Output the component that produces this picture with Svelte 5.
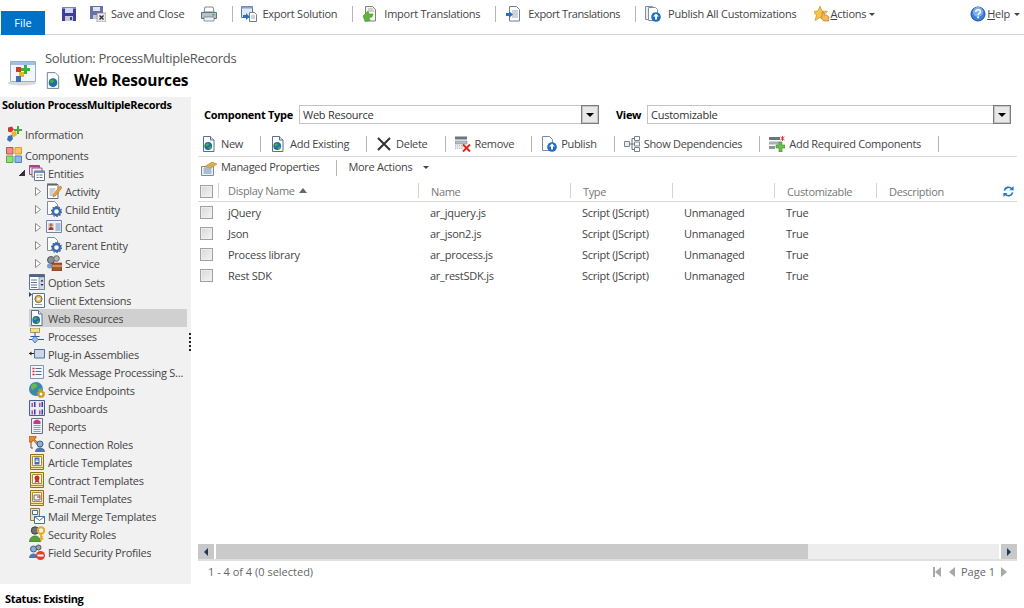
<script>
  const ribbon = [
    { icon: 'save', cls: 'lead' },
    { icon: 'saveclose', text: 'Save and Close', cls: 'gap14' },
    { icon: 'print', cls: 'gap17' },
    { sep: true },
    { icon: 'export', text: 'Export Solution', cls: 'rexport' },
    { sep: true },
    { icon: 'import', text: 'Import Translations', cls: 'rimport' },
    { sep: true },
    { icon: 'exporttr', text: 'Export Translations', cls: 'rexptr' },
    { sep: true },
    { icon: 'publishall', text: 'Publish All Customizations', cls: 'rpub' }
  ];
  const cmd1 = [
    { icon: 'web', text: 'New' },
    { icon: 'web', text: 'Add Existing' },
    { icon: 'delete', text: 'Delete' },
    { icon: 'remove', text: 'Remove' },
    { icon: 'publish', text: 'Publish' },
    { icon: 'showdep', text: 'Show Dependencies' },
    { icon: 'addreq', text: 'Add Required Components' }
  ];
  const entities = [
    { icon: 'activity', text: 'Activity' },
    { icon: 'entity', text: 'Child Entity' },
    { icon: 'contact', text: 'Contact' },
    { icon: 'entity', text: 'Parent Entity' },
    { icon: 'service', text: 'Service' }
  ];
  const nav = [
    { icon: 'optionsets', text: 'Option Sets' },
    { icon: 'clientext', text: 'Client Extensions' },
    { icon: 'web', text: 'Web Resources', selected: true },
    { icon: 'processes', text: 'Processes' },
    { icon: 'plugin', text: 'Plug-in Assemblies' },
    { icon: 'sdk', text: 'Sdk Message Processing S...' },
    { icon: 'endpoints', text: 'Service Endpoints' },
    { icon: 'dashboards', text: 'Dashboards' },
    { icon: 'reports', text: 'Reports' },
    { icon: 'conn', text: 'Connection Roles' },
    { icon: 'article', text: 'Article Templates' },
    { icon: 'contract', text: 'Contract Templates' },
    { icon: 'email', text: 'E-mail Templates' },
    { icon: 'mailmerge', text: 'Mail Merge Templates' },
    { icon: 'security', text: 'Security Roles' },
    { icon: 'fieldsec', text: 'Field Security Profiles' }
  ];
  const rows = [
    ['jQuery', 'ar_jquery.js'],
    ['Json', 'ar_json2.js'],
    ['Process library', 'ar_process.js'],
    ['Rest SDK', 'ar_restSDK.js']
  ];
</script>

{#snippet doc()}
  <path d="M2.500 .5h7l3.500 3.500v11.500h-10.500z" fill="#fff" stroke="#5d7186"/>
  <path d="M9.500 .5v3.500h3.500" fill="#dfe6ee" stroke="#5d7186"/>
{/snippet}

{#snippet ic(name)}
  <svg class="ic" width="16" height="16" viewBox="0 0 16 16" aria-hidden="true">
    {#if name === 'save'}
      <path d="M1 1h14v14h-14z" fill="#3d3f9c"/><path d="M1 1h14v2h-14z" fill="#7d80d6"/>
      <path d="M4 2h8v5h-8z" fill="#d5d7f0"/><path d="M4 10h8v5h-8z" fill="#c9c9d2"/><path d="M9 11h2v3h-2z" fill="#3d3f9c"/>
    {:else if name === 'saveclose'}
      <path d="M0 0h13v13h-13z" fill="#6a71a8"/><path d="M3 1h7v4h-7z" fill="#dfe3f3"/><path d="M3 9h7v4h-7z" fill="#c5c7d2"/>
      <path d="M7 7h9v9h-9z" fill="#e8e8e8" stroke="#777" stroke-width=".6"/><path d="M9.500 9.500l4 4m0-4l-4 4" stroke="#333" stroke-width="1.400"/>
    {:else if name === 'print'}
      <path d="M4 1h8l1 5h-10z" fill="#fff" stroke="#7b8794"/><path d="M.5 6.500h15v6h-15z" fill="#b9c1c9" stroke="#66717c"/>
      <path d="M3 11h10v4h-10z" fill="#eef1f3" stroke="#66717c" stroke-width=".7"/><path d="M11.500 8h2v1.500h-2z" fill="#29b34a"/>
    {:else if name === 'export'}
      <path d="M.5 .5h11v11h-11z" fill="#dfeaf6" stroke="#5c7aa0"/><path d="M.5 .5h11v2h-11z" fill="#7ea3cf"/>
      <path d="M8.500 6.500h5l2 2v7h-7z" fill="#fff" stroke="#6f7f90"/><path d="M10 10h4m-4 2h4" stroke="#9aa7b3"/>
      <path d="M2 9h3v-2l3.500 3.500-3.500 3.500v-2h-3z" fill="#2a6fc3"/>
    {:else if name === 'import'}
      <path d="M3.500 .5h7l3 3v11.500h-10z" fill="#f6f6ee" stroke="#7a8578"/><path d="M6 3h5m-5 2h6" stroke="#a9b0a0"/>
      <path d="M1 10l5-5 1 3 4 0-1 3-3 .500 1 3-5 1z" fill="#5db53a" stroke="#3a8a25" stroke-width=".5"/>
    {:else if name === 'exporttr'}
      <path d="M4.500 .5h7l3 3v11.500h-10z" fill="#fff" stroke="#6f7f90"/><path d="M7 5h6m-6 2h6m-6 2h6m-6 2h6" stroke="#9aa7b3"/>
      <path d="M1 7h3v-2l4 3.500-4 3.500v-2h-3z" fill="#2a6fc3"/>
    {:else if name === 'publishall'}
      <path d="M.5 .5h7l2 2v11h-9z" fill="#e9eef4" stroke="#8090a2"/><path d="M3.500 1.500h7l2 2v11h-9z" fill="#fff" stroke="#8090a2"/>
      <circle cx="11" cy="11" r="4.800" fill="#1e6cc0"/><path d="M11 7.500l3 3h-2v3h-2v-3h-2z" fill="#fff"/>
    {:else if name === 'publish'}
      <path d="M1.500 .5h7l3 3v11h-10z" fill="#fff" stroke="#7b8ba0"/>
      <circle cx="11" cy="11" r="4.800" fill="#1e6cc0"/><path d="M11 7.500l3 3h-2v3h-2v-3h-2z" fill="#fff"/>
    {:else if name === 'actions'}
      <path d="M6 0l2 5 5.500.500-4 3.500 1.500 5.500-5-3-5 3 1.500-5.500-4-3.500 5.500-.500z" fill="#f2c64a" stroke="#b98d1c" stroke-width=".6"/>
      <path d="M8 6l1.500 0 1 3 2 0 2.500 2-.5 4-5 0-3-4 1.500-.500z" fill="#f4b958" stroke="#a9701c" stroke-width=".6"/>
    {:else if name === 'help'}
      <circle cx="8" cy="8" r="7" fill="#3f7fd6" stroke="#1f4fa0"/><circle cx="8" cy="6" r="5" fill="#7fb0ec"/>
      <path d="M5.800 6c0-3 4.600-3 4.600-.300 0 1.800-2.300 1.800-2.300 3.500" fill="none" stroke="#fff" stroke-width="1.500"/><path d="M7.200 10.500h1.800v1.800h-1.800z" fill="#fff"/>
    {:else if name === 'web'}
      {@render doc()}
      <circle cx="7.200" cy="10" r="3.900" fill="#1f6fa8"/><path d="M4.500 8.500c1.300-1.700 3-1.300 3.500-.3s-1 1.800-2 1.800-1.800 0-1.500-1.500z" fill="#4bad3e"/><path d="M7.500 11.500l2.800-1.500-.5 2.200-1.500 1.200z" fill="#4bad3e"/>
    {:else if name === 'delete'}
      <path d="M2 2l12 12m0-12l-12 12" stroke="#333" stroke-width="2"/>
    {:else if name === 'remove'}
      <path d="M0 .5h12v3h-12z" fill="#6b7580"/><path d="M0 5h12v3h-12z" fill="#b9c0c8" stroke="#6b7580" stroke-width=".5"/><path d="M0 9.500h8v3h-8z" fill="#e2e5e8" stroke="#8a929a" stroke-width=".5" stroke-dasharray="1"/>
      <path d="M8 8.500l7 7m0-7l-7 7" stroke="#e0261c" stroke-width="2"/>
    {:else if name === 'showdep'}
      <path d="M.5 5.500h5v5h-5z" fill="#e9edf1" stroke="#77838f"/><path d="M10.500 .5h5v4h-5zM10.500 6h5v4h-5zM10.500 11.500h5v4h-5z" fill="#fff" stroke="#77838f"/>
      <path d="M5.500 8h5m-2.500-5.500v11m0-11h2.500m-2.500 11h2.500" fill="none" stroke="#66717c"/>
    {:else if name === 'addreq'}
      <path d="M0 1h11v3h-11z" fill="#6b7580"/><path d="M0 5.500h11v3h-11z" fill="#a7b0ba"/><path d="M0 10h6v3h-6z" fill="#8b95a0"/>
      <path d="M8 9h3v-3h3v3h3v3h-3v4h-3v-4h-3z" transform="translate(-1 0)" fill="#6cc04a" stroke="#3d8a25" stroke-width=".6"/>
      <path d="M13.500 0v5m-2-4l4 3m0-3l-4 3" stroke="#e0261c" stroke-width=".9"/>
    {:else if name === 'managed'}
      <path d="M.5 6.500h12v9h-12z" fill="#eef2f6" stroke="#7b8ba0"/><path d="M2.500 9h8m-8 2h8m-8 2h8" stroke="#6b88ad"/>
      <path d="M3 7l8-5 5 2-6 4z" fill="#d8b04a" stroke="#9e7c24" stroke-width=".5"/>
    {:else if name === 'info'}
      <path d="M2 1.500l4-1 2 3-3 3-3-1z" fill="#d9342a"/><path d="M6 6l4-1 1 4-3 2-3-1z" fill="#eab52a"/><path d="M2 10l4-1 1 4-3 3-3-2z" fill="#3a6fc0"/>
      <path d="M11 0h2v3h3v2h-3v3h-2v-3h-3v-2h3z" fill="#3fae3a"/>
    {:else if name === 'components'}
      <path d="M.5 .5h6.500v6.500h-6.500z" fill="#f28c8c" stroke="#d24a4a"/><path d="M9 .5h6.500v6.500h-6.500z" fill="#fbc55a" stroke="#e49a1c"/>
      <path d="M.5 9h6.500v6.500h-6.500z" fill="#92dc7c" stroke="#4eaf3a"/><path d="M9 9h6.500v6.500h-6.500z" fill="#8fb8ef" stroke="#4a80cf"/>
    {:else if name === 'entities'}
      <path d="M.5 .5h10v9h-10z" fill="#f2e8ef" stroke="#9a4a7c"/><path d="M.5 .5h10v2h-10z" fill="#a2487f"/>
      <path d="M3 3h10v9h-10z" fill="#f2eef2" stroke="#8a5a84"/><path d="M5.500 6h10v9.500h-10z" fill="#fff" stroke="#5f7590"/><path d="M5.500 6h10v2h-10z" fill="#7390b4"/>
      <path d="M7.500 10h2m1 0h3m-6 2.500h2m1 0h3" stroke="#5f7590"/>
    {:else if name === 'activity'}
      <path d="M1.500 1.500h10.500v14h-10.500z" fill="#fff" stroke="#66717c"/><path d="M2 0v3m2-3v3m2-3v3m2-3v3m2-3v3" stroke="#555"/>
      <path d="M3.500 6h6m-6 2h5m-5 2h4m-4 2h4" stroke="#8f9ba8"/><path d="M14 3l2 1.500-6 8-3 1.500.5-3z" fill="#eba23a" stroke="#a5641c" stroke-width=".5"/>
    {:else if name === 'entity'}
      <path d="M1.500 .5h7l3 3v10h-10z" fill="#fff" stroke="#7b8ba0"/>
      <circle cx="10.500" cy="10.500" r="3.500" fill="#fff" stroke="#3a6aa8" stroke-width="2.400"/><circle cx="10.500" cy="10.500" r="5" fill="none" stroke="#3a6aa8" stroke-width="1.200" stroke-dasharray="1.600 1.500"/>
    {:else if name === 'contact'}
      <path d="M.5 1.500h15v12h-15z" fill="#eef3f9" stroke="#6f88aa"/><path d="M2 4h6v7h-6z" fill="#cbd6e4"/><circle cx="5" cy="6" r="1.700" fill="#c86a3a"/><path d="M2.500 11c0-4 5-4 5 0z" fill="#a83a1c"/>
      <path d="M9.500 5h5m-5 2h5m-5 2h5m-5 2h5" stroke="#6b88ad"/>
    {:else if name === 'service'}
      <circle cx="5" cy="5" r="3.500" fill="#8a8f95" stroke="#555"/><circle cx="10.500" cy="3.500" r="2.800" fill="#b0b4b8" stroke="#666"/>
      <circle cx="3.500" cy="11" r="2.500" fill="#7a9ad8"/><path d="M6 8h10v8h-10z" fill="#a8582a" stroke="#6a3416" stroke-width=".6"/><path d="M6 11h10" stroke="#e8c9a0"/>
    {:else if name === 'optionsets'}
      <path d="M.5 .5h15v15h-15z" fill="#fff" stroke="#5f7590"/><path d="M.5 .5h15v2.500h-15z" fill="#4a6588"/><path d="M10 3h5.500v12.500h-5.500z" fill="#cfd9e6" stroke="#5f7590" stroke-width=".6"/>
      <path d="M2 6h6m-6 2.500h6m-6 2.500h6m-6 2.500h6" stroke="#5f7590"/><path d="M11.500 7.500l1.500-2 1.500 2zM11.500 10l1.500 2 1.500-2z" fill="#223"/>
    {:else if name === 'clientext'}
      <path d="M3.500 1.500h12v14h-12z" fill="#fff" stroke="#5f7590"/><circle cx="9.500" cy="7" r="3.600" fill="#e0c070" stroke="#7d6420"/><circle cx="9.500" cy="7" r="1.300" fill="#fff"/>
      <path d="M6 12.500h7" stroke="#8fa3b8"/><path d="M0 0l3 2.500-3 2.500z" fill="#1e3f9a"/>
    {:else if name === 'processes'}
      <path d="M1.500 0h9v4.500h-9z" fill="#f3e08a" stroke="#8e7a26" stroke-width=".7"/><path d="M6 4.500v4m-4.500 0h9" stroke="#2a5aa0"/>
      <path d="M6 8l3 3.500-3 3.500-3-3.500z" fill="#9cc0ea" stroke="#2a5aa0" stroke-width=".7"/><path d="M0 11.500h3m6 0h6" stroke="#2a5aa0"/>
    {:else if name === 'plugin'}
      <path d="M5.500 3.500h10v8.500h-10z" fill="#c8d8ea" stroke="#55708f"/><path d="M0 7.500h5" stroke="#223" stroke-width="1"/><path d="M0 7.500l2.500-2v4z" fill="#223"/>
    {:else if name === 'sdk'}
      <path d="M1.500 1.500h13v13h-13z" fill="#f3f6fa" stroke="#7f95b2"/><path d="M3.500 4.500h2m-2 3h2m-2 3h2" stroke="#d22" stroke-width="1.400"/><path d="M6.500 4.500h6m-6 3h6m-6 3h6" stroke="#55708f"/>
    {:else if name === 'endpoints'}
      <circle cx="7" cy="7" r="7" fill="#3a86b4"/><path d="M2 4c2-3 5-3 6-1s-2 3-3 4-3 2-3-3z" fill="#6cb84a"/><path d="M9 7l4-1 .5 4-3 1z" fill="#6cb84a"/>
      <circle cx="12" cy="12" r="2.500" fill="#fff" stroke="#c99a24" stroke-width="2"/><circle cx="12" cy="12" r="3.800" fill="none" stroke="#c99a24" stroke-dasharray="1.500"/>
    {:else if name === 'dashboards'}
      <path d="M.5 .5h15v15h-15z" fill="#f5f7fb" stroke="#4a5f90"/><path d="M1 1h6.500v6.500h-6.500zM8.500 1h6.500v6.500h-6.500zM1 8.500h6.500v6.500h-6.500zM8.500 8.500h6.500v6.500h-6.500z" fill="#dbe4f3"/>
      <path d="M2.500 3h1.500v4h-1.500zM10 3h1.500v4h-1.500zM2.500 10.500h1.500v4h-1.500zM10 10.500h1.500v4h-1.500z" fill="#d2438a"/><path d="M5 2h1.500v5h-1.500zM12.500 2h1.500v5h-1.500zM5 9.500h1.500v5h-1.500zM12.500 9.500h1.500v5h-1.500z" fill="#34459c"/>
    {:else if name === 'reports'}
      <path d="M2.500 .5h11v15h-11z" fill="#eef1f6" stroke="#66717c"/><path d="M4.500 3.500c2-2.500 5-2.500 7 0v2.500h-7z" fill="#c23a8a"/><path d="M4.500 7.500h7m-7 2h7m-7 2h7m-7 2h7" stroke="#8f9ba8"/>
    {:else if name === 'conn'}
      <path d="M0 0h7v2l-2 1 7 6-2 2-6-7-1 2h-3z" fill="#e88a2a" stroke="#8a4a14" stroke-width=".6"/><path d="M2 6v6h2" fill="none" stroke="#8a4a14"/>
      <circle cx="11" cy="8" r="3" fill="#8ab0d8" stroke="#3a5f8a"/><path d="M6 16c0-6 10-6 10 0z" fill="#4a78b0"/>
    {:else if name === 'article' || name === 'contract' || name === 'email'}
      <path d="M1.500 .5h13v15h-13z" fill="#f3e3a4" stroke="#8e6f1c"/><path d="M3.500 2.500h9v9h-9z" fill="#fff" stroke="#b08c2a"/><path d="M1.500 13.500h13" stroke="#b08c2a"/>
      {#if name === 'article'}
        <path d="M5.500 3.500h5v7h-5z" fill="#3a6fc0"/><path d="M6.500 6h3m-3 1.500h3" stroke="#fff"/>
      {:else if name === 'contract'}
        <circle cx="8" cy="6" r="2.500" fill="#d42a1c"/><path d="M6.500 8l-1 3 2.500-1 2.500 1-1-3z" fill="#d42a1c"/>
      {:else}
        <path d="M5 5h6v5h-6z" fill="#eef2f6" stroke="#55708f"/><path d="M8 7h3" stroke="#d42a1c"/>
      {/if}
    {:else if name === 'mailmerge'}
      <path d="M1.500 .5h9v12h-9z" fill="#e9dfb8" stroke="#8e7c4a"/><path d="M3.500 2.500h5v4h-5z" fill="#fff" stroke="#55708f"/>
      <path d="M5.500 8.500h10v7h-10z" fill="#fff" stroke="#4a6f9a"/><path d="M5.500 8.500l5 4 5-4" fill="none" stroke="#4a6f9a"/>
    {:else if name === 'security'}
      <circle cx="6" cy="4.500" r="3.700" fill="#6b7075" stroke="#3d4145"/><path d="M.5 16c0-8 11-8 11 0z" fill="#5aa03a" stroke="#356a22" stroke-width=".6"/>
      <circle cx="12" cy="4.500" r="3.200" fill="none" stroke="#e3ac22" stroke-width="2"/><path d="M12 8v7m0-2h2.500m-2.500-2h2" stroke="#e3ac22" stroke-width="1.700"/>
    {:else if name === 'fieldsec'}
      <circle cx="4.500" cy="5" r="3" fill="#8ab0d8" stroke="#3a5f8a"/><circle cx="9.500" cy="3.500" r="2.500" fill="#9aa0a8" stroke="#555"/>
      <path d="M0 14c0-6 9-6 9 0z" fill="#4a78b0"/><circle cx="11.500" cy="11.500" r="4.500" fill="#e0402a"/><path d="M8.500 10.500h6v2h-6z" fill="#fff"/>
    {/if}
  </svg>
{/snippet}

{#snippet caret()}<i class="caret"></i>{/snippet}

{#snippet tri()}
  <svg class="tri" width="6" height="9" viewBox="0 0 6 9" aria-hidden="true"><path d="M.5 .5l5 4-5 4z" fill="#fff" stroke="#8a8a8a"/></svg>
{/snippet}

{#snippet dropdown(value, cls)}
  <div class="select {cls}">
    <span>{value}</span>
    <b class="drop"><i></i></b>
  </div>
{/snippet}

<div class="page">
  <header class="ribbon">
    <div class="file">File</div>
    {#each ribbon as item}
      {#if item.sep}
        <i class="sep rsep"></i>
      {:else}
        <div class="ritem {item.cls ?? ''}">
          {@render ic(item.icon)}
          {#if item.text}<span>{item.text}</span>{/if}
        </div>
      {/if}
    {/each}
    <div class="ritem actions">
      {@render ic('actions')}
      <span><u>A</u>ctions</span>
      {@render caret()}
    </div>
    <div class="ritem help">
      {@render ic('help')}
      <span><u>H</u>elp</span>
      {@render caret()}
    </div>
  </header>

  <section class="head">
    <svg class="bigicon" width="30" height="28" viewBox="0 0 30 28" aria-hidden="true">
      <ellipse cx="14" cy="24" rx="14" ry="2.500" fill="#d9d9d9"/>
      <path d="M2.500 2.500h25v20h-25z" fill="#f3f7fb" stroke="#9cb0c4"/><path d="M3 3h24v3h-24z" fill="#9cc0e6"/>
      <path d="M8 8h5v5h-5z" fill="#d9342a"/><path d="M11 13h5v5h-5z" fill="#eab52a"/><path d="M8 17h5v6h-5z" fill="#3a6fc0"/>
      <path d="M16 6h3v3h3v3h-3v3h-3v-3h-3v-3h3z" fill="#3fae3a"/>
    </svg>
    <div>
      <div class="crumb">Solution: ProcessMultipleRecords</div>
      <div class="titlerow">
        <svg class="docicon" width="14" height="17" viewBox="0 0 16 19" aria-hidden="true">
          <path d="M1.500 .5h9l4 4v14h-13z" fill="#fff" stroke="#5d7186"/>
          <circle cx="8" cy="12" r="5" fill="#1f6fa8"/><path d="M5 9.500c2-1.500 3.500-1 4 0s-1 3-2 3-3 0-2-3z" fill="#4bad3e"/>
        </svg>
        <h1>Web Resources</h1>
      </div>
    </div>
  </section>

  <div class="body">
    <aside class="side">
      <div class="sidetitle">Solution ProcessMultipleRecords</div>
      <div class="node top info">{@render ic('info')}<span>Information</span></div>
      <div class="node top comp">{@render ic('components')}<span>Components</span></div>
      <div class="node lvl1 ent"><i class="open"></i>{@render ic('entities')}<span>Entities</span></div>
      {#each entities as e}
        <div class="node lvl2">{@render tri()}{@render ic(e.icon)}<span>{e.text}</span></div>
      {/each}
      <div class="navlist">
        {#each nav as n}
          <div class="node lvl1b" class:selected={n.selected}>{@render ic(n.icon)}<span>{n.text}</span></div>
        {/each}
      </div>
      <i class="splitter"></i>
    </aside>

    <main class="main">
      <div class="filters">
        <label class="ctype">Component Type</label>
        {@render dropdown('Web Resource', 'sel1')}
        <label class="vlabel">View</label>
        {@render dropdown('Customizable', 'sel2')}
      </div>

      <div class="cmd one">
        {#each cmd1 as c}
          <div class="citem">{@render ic(c.icon)}<span>{c.text}</span></div>
          <i class="sep csep"></i>
        {/each}
      </div>
      <div class="cmd two">
        <div class="citem">{@render ic('managed')}<span>Managed Properties</span></div>
        <i class="sep csep short"></i>
        <div class="citem more"><span>More Actions</span>{@render caret()}</div>
      </div>

      <div class="grid ghead">
        <div class="cell chk"><i class="check"></i></div>
        <div class="cell hc first">Display Name <i class="up"></i></div>
        <div class="cell hc">Name</div>
        <div class="cell hc">Type</div>
        <div class="cell hc"></div>
        <div class="cell hc">Customizable</div>
        <div class="cell hc last">Description
          <svg class="refresh" width="11" height="11" viewBox="0 0 12 12" aria-hidden="true">
            <path d="M1.500 5a4.600 4.600 0 0 1 8-2" fill="none" stroke="#1976c8" stroke-width="1.800"/><path d="M7 4.500h4.500v-4.500z" fill="#1976c8"/>
            <path d="M10.500 7a4.600 4.600 0 0 1-8 2" fill="none" stroke="#1976c8" stroke-width="1.800"/><path d="M5 7.500h-4.500v4.500z" fill="#1976c8"/>
          </svg>
        </div>
      </div>
      <div class="rows">
        {#each rows as r}
          <div class="grid row">
            <div class="cell chk"><i class="check"></i></div>
            <div class="cell first">{r[0]}</div>
            <div class="cell">{r[1]}</div>
            <div class="cell">Script (JScript)</div>
            <div class="cell">Unmanaged</div>
            <div class="cell">True</div>
            <div class="cell"></div>
          </div>
        {/each}
      </div>

      <div class="hscroll">
        <b class="sbtn"><i class="al"></i></b>
        <div class="track"><div class="thumb"></div></div>
        <b class="sbtn"><i class="ar"></i></b>
      </div>
      <div class="foot">
        <span>1 - 4 of 4 (0 selected)</span>
        <div class="pager">
          <i class="pfirst"></i><i class="pprev"></i><span>Page 1</span><i class="pnext"></i>
        </div>
      </div>
    </main>
  </div>

  <footer class="status">Status: Existing</footer>
</div>

<style>
  :global(body) { margin: 0; background: #fff; }
  .page {
    width: 1024px; height: 608px; overflow: hidden; display: flex; flex-direction: column;
    font-family: "Open Sans", "Noto Sans", sans-serif; font-size: 11px; color: #444; background: #fff;
    letter-spacing: -.25px;
  }
  .ic { flex: none; display: block; }
  .sep { flex: none; display: block; background: #b5b5b5; width: 1px; }

  .ribbon { height: 34px; flex: none; display: flex; align-items: flex-start; border-bottom: 1px solid #d4d4d4; position: relative; }
  .file {
    flex: none; width: 44px; height: 24px; margin: 11px 0 0 1px; background: #0072c6; color: #fff;
    text-align: center; line-height: 24px; font-size: 11px; z-index: 1; letter-spacing: 0;
  }
  .ritem { display: flex; align-items: center; gap: 5px; height: 16px; margin-top: 6px; margin-left: 9px; flex: none; }
  .ritem span { white-space: nowrap; color: #444; line-height: 16px; }
  .ritem.lead { margin-left: 16px; }
  .ritem.gap14 { margin-left: 13px; }
  .ritem.gap17 { margin-left: 17px; }
  .ritem.rexport { margin-left: 8px; }
  .ritem.rimport { gap: 6px; }
  .ritem.rexptr { gap: 7px; }
  .ritem.rexptr span { letter-spacing: -.4px; }
  .ritem.rpub { gap: 7px; }
  .rsep { height: 16px; margin: 6px 0 0 15px; }
  .ritem.actions { margin-left: 18px; gap: 0; }
  .ritem.help { margin-left: auto; margin-right: 4px; gap: 1px; }
  .caret { display: block; width: 0; height: 0; border: 3px solid transparent; border-top: 3px solid #444; border-bottom: 0; margin-left: 3px; }

  .head { height: 62px; flex: none; display: flex; align-items: flex-start; }
  .bigicon { margin: 24px 0 0 8px; flex: none; }
  .head > div { margin-left: 7px; }
  .crumb { font-size: 13px; letter-spacing: -.33px; line-height: 19px; margin-top: 14px; color: #555; white-space: nowrap; }
  .titlerow { display: flex; align-items: flex-start; margin-top: 3px; height: 19px; }
  .docicon { margin-left: 1px; margin-top: 1px; }
  h1 { margin: 0 0 0 14px; font-size: 15.500px; letter-spacing: -.18px; font-weight: 700; color: #000; line-height: 19px; white-space: nowrap; }

  .body { flex: none; height: 487px; display: flex; min-height: 0; }
  .side { width: 191px; flex: none; background: #f1f1f1; position: relative; }
  .sidetitle { font-weight: 700; color: #000; padding-left: 2px; height: 17px; line-height: 16px; white-space: nowrap; letter-spacing: -.33px; }
  .node { display: flex; align-items: center; height: 18px; gap: 3px; white-space: nowrap; }
  .top { padding-left: 6px; }
  .info { margin-top: 11px; }
  .comp { margin-top: 3px; }
  .lvl1 { padding-left: 19px; }
  .open { display: block; flex: none; width: 6px; height: 6px; margin-right: 1px; background: linear-gradient(135deg, transparent 50%, #333 50%); }
  .lvl2 { padding-left: 35px; }
  .tri { display: block; flex: none; margin-right: 2px; }
  .navlist { margin-top: 1px; }
  .lvl1b { width: 158px; margin-left: 29px; overflow: hidden; }
  .lvl1b span { overflow: hidden; }
  .selected { background: #d0d0d0; }
  .splitter { position: absolute; left: 189px; top: 236px; width: 2px; height: 18px; background: repeating-linear-gradient(#222 0 2px, transparent 2px 4px); }

  .main { flex: 1; min-width: 0; display: flex; flex-direction: column; padding: 8px 7px 0; box-sizing: border-box; }
  .filters { display: flex; align-items: center; height: 19px; flex: none; }
  label { font-weight: 700; color: #000; white-space: nowrap; letter-spacing: -.3px; }
  .ctype { margin-left: 6px; width: 95px; flex: none; }
  .vlabel { margin-left: 17px; width: 31px; flex: none; }
  .select {
    height: 19px; box-sizing: border-box; border: 1px solid #c4c4c4; display: flex; align-items: center; justify-content: space-between;
    flex: none; color: #333; background: #fff; padding-left: 3px;
  }
  .sel1 { width: 300px; }
  .sel2 { width: 364px; }
  .drop {
    display: flex; align-items: center; justify-content: center; width: 18px; height: 19px; margin-right: -1px; background: #e8e8e8;
    border: 1px solid #7d7d7d; box-shadow: inset 0 0 0 1px #c4c4c4; box-sizing: border-box;
  }
  .drop i { display: block; width: 0; height: 0; border: 4px solid transparent; border-top: 4px solid #000; border-bottom: 0; }

  .cmd { display: flex; align-items: center; flex: none; }
  .cmd.one { margin-top: 8px; height: 24px; border-bottom: 1px solid #dcdcdc; padding-left: 3px; }
  .cmd.two { height: 21px; padding-left: 3px; }
  .citem { display: flex; align-items: center; gap: 4px; white-space: nowrap; flex: none; letter-spacing: -.3px; }
  .citem span { margin-top: -2px; }
  .csep { height: 16px; margin: 0 9px 0 17px; }
  .csep.short { margin: 0 11px 0 17px; }
  .more .caret { margin-left: 7px; }

  .grid { display: grid; grid-template-columns: 20px 200px 152px 102px 102px 102px 1fr; align-items: center; }
  .ghead { margin-top: 5px; height: 18px; border-bottom: 1px solid #d8d8d8; flex: none; }
  .cell { white-space: nowrap; padding-left: 12px; min-width: 0; }
  .cell.first { padding-left: 10px; }
  .chk { padding: 0 0 0 2px; display: flex; }
  .hc { color: #777; border-left: 1px solid #d4d4d4; height: 15px; line-height: 17px; margin-top: -3px; position: relative; letter-spacing: -.35px; }
  .hc.first { display: flex; align-items: center; gap: 3px; padding-left: 9px; }
  .ghead .chk { margin-top: -2px; }
  .up { display: block; width: 0; height: 0; border: 4.500px solid transparent; border-bottom: 5px solid #666; border-top: 0; margin-left: 1px; }
  .check {
    display: block; width: 13px; height: 13px; box-sizing: border-box; border: 1px solid #a0a0a0;
    background: linear-gradient(135deg, #d8d8d8, #f4f4f4); box-shadow: inset 0 0 0 1px #eee;
  }
  .refresh { position: absolute; right: 3px; top: 3px; }
  .rows { flex: 1; }
  .row { height: 21px; }

  .hscroll { flex: none; height: 15px; display: flex; border-bottom: 2px solid #e0e0e0; gap: 2px; }
  .sbtn { flex: none; width: 16px; background: #c8c8c8; display: flex; align-items: center; justify-content: center; }
  .al, .ar { display: block; width: 0; height: 0; border: 4px solid transparent; }
  .al { border-right: 4px solid #1c3760; border-left: 0; }
  .ar { border-left: 4px solid #1c3760; border-right: 0; }
  .track { flex: 1; background: #ededed; }
  .thumb { width: 592px; height: 100%; background: #cacaca; }

  .foot { flex: none; height: 23px; box-sizing: border-box; padding: 0 10px 2px; display: flex; align-items: center; justify-content: space-between; color: #666; letter-spacing: 0; }
  .pager { display: flex; align-items: center; gap: 6px; color: #666; }
  .pfirst, .pprev, .pnext { display: block; width: 0; height: 0; border-top: 5px solid transparent; border-bottom: 5px solid transparent; }
  .pfirst { border-right: 6px solid #a8a8a8; box-shadow: -2px 0 0 #a8a8a8; margin-right: 2px; }
  .pprev { border-right: 6px solid #a8a8a8; }
  .pnext { border-left: 6px solid #a8a8a8; }

  .status { flex: 1; font-weight: 700; color: #000; padding: 7px 0 0 5px; line-height: 16px; letter-spacing: -.34px; }
</style>
